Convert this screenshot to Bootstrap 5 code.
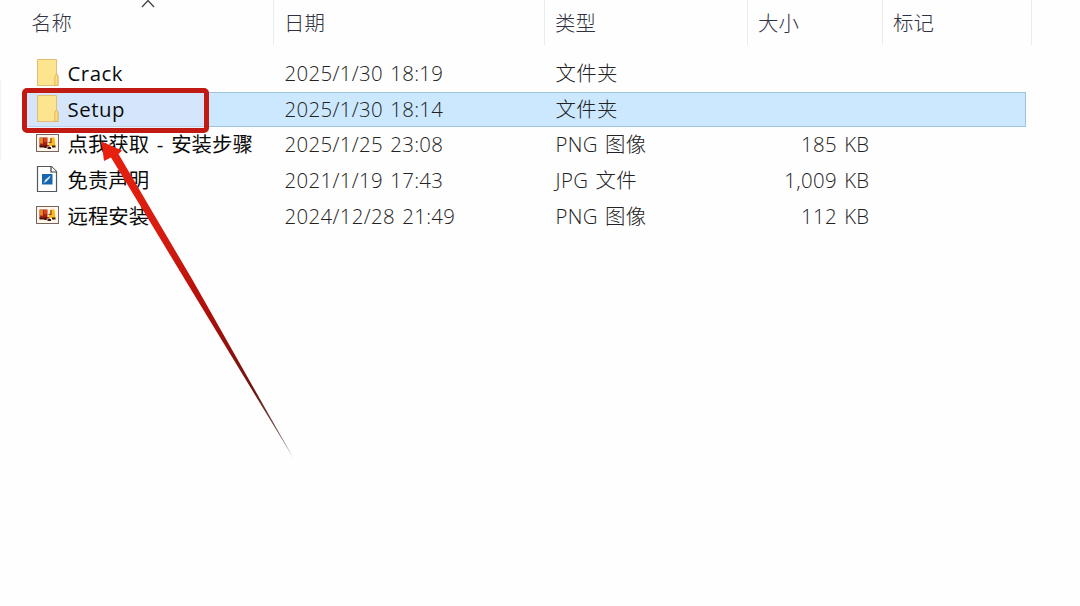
<!DOCTYPE html>
<html lang="zh-CN">
<head>
  <meta charset="UTF-8">
  <title>Setup</title>
  <link href="https://cdn.jsdelivr.net/npm/bootstrap@5.3.0/dist/css/bootstrap.min.css" rel="stylesheet">
  <style>
    body {
      font-family: "Open Sans", "Noto Sans CJK SC", sans-serif;
      font-size: 20.4px;
      line-height: 30px;
      font-weight: 300;
      color: #222;
      background: #fefefe;
      height: 606px;
      overflow: hidden;
    }
    .explorer { width: 1010px; margin-left: 21.5px; }
    .file-grid {
      display: grid;
      grid-template-columns: 252px 271px 203px 135px 149px;
    }
    .head-row { height: 45px; margin-bottom: 11px; color: #303242; }
    .head-row > div { border-right: 1px solid #ebebeb; padding: 8px 0 0 10.5px; }
    .head-row > div:first-child { padding-left: 9.5px; }
    .sort-mark { left: 119.5px; top: -2px; }
    .file-row {
      height: 35.6px;
      width: 1004px;
      grid-template-columns: 252px 271px 203px 135px 1fr;
      align-items: center;
      letter-spacing: .35px;
      word-spacing: 1.5px;
    }
    .file-row > div { padding: 0 0 1px 11px; white-space: nowrap; }
    .file-row .file-name {
      display: flex;
      align-items: center;
      padding-left: 13.5px;
      font-weight: 400;
      letter-spacing: 0;
      word-spacing: 2.5px;
      color: #0c0c0c;
    }
    .file-name svg { width: 24px; height: 28px; margin: -2px 8.5px 0 0; flex: none; }
    .file-name .latin { letter-spacing: .5px; }
    .file-row .file-size { padding: 0 13px 1px 0; text-align: right; }
    .file-row.selected { background: #cce8ff; box-shadow: inset 0 0 0 1px #9cc5dc; }
    .red-frame {
      left: 21.5px; top: 87.5px; width: 187.5px; height: 45px;
      border: 5px solid #c11a13;
      border-radius: 5px;
      background: rgba(224, 228, 248, .45);
    }
    .arrow { left: 0; top: 0; }
    .edge-line { left: 0; top: 80px; width: 1px; height: 80px; background: #f2f2f2; }
    .selected .file-name svg, .selected .file-name span { position: relative; z-index: 2; }
  </style>
</head>
<body class="position-relative">

  <svg class="d-none">
    <symbol id="folder" viewBox="0 0 24 28">
      <path d="M2.5 1.5H21.5V16L23 18V27.5H2.5Z" fill="#fde48e" stroke="#e3bd72"/>
      <path d="M21.5 15.5L19.8 18.5V27.5H23V18Z" fill="#fbdc7c" stroke="#d9b05c" stroke-width=".8"/>
    </symbol>
    <symbol id="png" viewBox="0 0 24 28">
      <rect x="1.500" y="5.500" width="22" height="17" fill="#fff8ea" stroke="#77645f"/>
      <path d="M4.500 8.500H12.500V16H15V17.500L4.500 17.500Z" fill="#a8230e"/>
      <path d="M5 9H8V14.500H5Z" fill="#e8881a"/>
      <path d="M9 9H12V13H9Z" fill="#d9421a"/>
      <path d="M14 14L15.500 8.500H19.500L20.500 17H14Z" fill="#f9b81f"/>
      <path d="M16 9V13.500H13.500" fill="none" stroke="#a43a12" stroke-width="1.200"/>
      <path d="M4.500 17.500H11M12.500 19H16M17 17.500H20.500" stroke="#421410" stroke-width="1.800"/>
      <circle cx="10.500" cy="17.500" r="1.700" fill="#5c160e"/>
    </symbol>
    <symbol id="jpg" viewBox="0 0 24 28">
      <path d="M2.500 1.500H16.500L21.500 6.500V26.500H2.500Z" fill="#fff" stroke="#56595c" stroke-width="1.200"/>
      <path d="M16 1.500V7H21.500" fill="#fff" stroke="#3b3d40" stroke-width="1.200"/>
      <rect x="7" y="9" width="10.500" height="10.500" fill="#1766ad"/>
      <path d="M8.500 18L10.500 14.500L15.500 10.500L14.800 13L11.500 16.500Z" fill="#d3e8f7"/>
    </symbol>
  </svg>

  <div class="edge-line position-absolute"></div>

  <div class="explorer">
    <div class="file-grid head-row position-relative">
      <div>名称</div>
      <div>日期</div>
      <div>类型</div>
      <div>大小</div>
      <div>标记</div>
      <svg class="sort-mark position-absolute" width="14" height="10" fill="none" stroke="#444" stroke-width="1.3"><path d="M1 9L7 2.500L13 9"/></svg>
    </div>

    <div class="file-grid file-row">
      <div class="file-name"><svg><use href="#folder"/></svg><span class="latin">Crack</span></div>
      <div>2025/1/30 18:19</div>
      <div>文件夹</div>
    </div>
    <div class="file-grid file-row selected">
      <div class="file-name"><svg><use href="#folder"/></svg><span class="latin">Setup</span></div>
      <div>2025/1/30 18:14</div>
      <div>文件夹</div>
    </div>
    <div class="file-grid file-row">
      <div class="file-name"><svg><use href="#png"/></svg><span>点我获取 - 安装步骤</span></div>
      <div>2025/1/25 23:08</div>
      <div>PNG 图像</div>
      <div class="file-size">185 KB</div>
    </div>
    <div class="file-grid file-row">
      <div class="file-name"><svg><use href="#jpg"/></svg><span>免责声明</span></div>
      <div>2021/1/19 17:43</div>
      <div>JPG 文件</div>
      <div class="file-size">1,009 KB</div>
    </div>
    <div class="file-grid file-row">
      <div class="file-name"><svg><use href="#png"/></svg><span>远程安装</span></div>
      <div>2024/12/28 21:49</div>
      <div>PNG 图像</div>
      <div class="file-size">112 KB</div>
    </div>
  </div>

  <!-- red markup over the list -->
  <div class="red-frame position-absolute"></div>
  <svg class="arrow position-absolute" width="320" height="470">
    <defs>
      <linearGradient id="fade" gradientUnits="userSpaceOnUse" x1="102" y1="142" x2="293" y2="457">
        <stop offset="0" stop-color="#e9200f"/>
        <stop offset=".3" stop-color="#d51c10"/>
        <stop offset=".55" stop-color="#ad0f0a"/>
        <stop offset=".8" stop-color="#6b1714"/>
        <stop offset="1" stop-color="#777"/>
      </linearGradient>
    </defs>
    <path d="M101.5 141.5L122 150.5L118.5 154L152.5 212L192 279L294 459L187 283L146.5 216L111 157.5L104 161Z" fill="url(#fade)"/>
  </svg>

  <script src="https://cdn.jsdelivr.net/npm/bootstrap@5.3.0/dist/js/bootstrap.bundle.min.js"></script>
</body>
</html>
